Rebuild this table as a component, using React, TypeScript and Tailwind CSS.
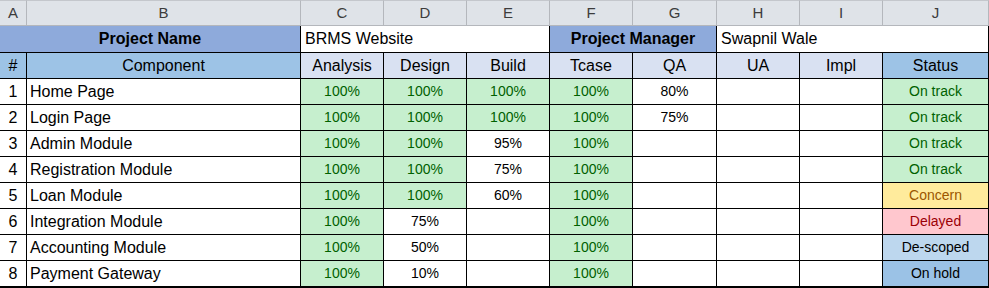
import React from "react";

type Tone = "g" | "w";
type Row = {
  n: number;
  name: string;
  vals: [string, Tone][];
  status: string;
};

const G: [string, Tone] = ["100%", "g"];
const W = (s: string): [string, Tone] => [s, "w"];

const rows: Row[] = [
  { n: 1, name: "Home Page", vals: [G, G, G, G, W("80%"), W(""), W("")], status: "On track" },
  { n: 2, name: "Login Page", vals: [G, G, G, G, W("75%"), W(""), W("")], status: "On track" },
  { n: 3, name: "Admin Module", vals: [G, G, W("95%"), G, W(""), W(""), W("")], status: "On track" },
  { n: 4, name: "Registration Module", vals: [G, G, W("75%"), G, W(""), W(""), W("")], status: "On track" },
  { n: 5, name: "Loan Module", vals: [G, G, W("60%"), G, W(""), W(""), W("")], status: "Concern" },
  { n: 6, name: "Integration Module", vals: [G, W("75%"), W(""), G, W(""), W(""), W("")], status: "Delayed" },
  { n: 7, name: "Accounting Module", vals: [G, W("50%"), W(""), G, W(""), W(""), W("")], status: "De-scoped" },
  { n: 8, name: "Payment Gateway", vals: [G, W("10%"), W(""), G, W(""), W(""), W("")], status: "On hold" },
];

const statusCls: Record<string, string> = {
  "On track": "bg-[#c6efce] text-[#006100]",
  Concern: "bg-[#ffeb9c] text-[#9c5700]",
  Delayed: "bg-[#ffc7ce] text-[#9c0006]",
  "De-scoped": "bg-[#bdd7ee] text-black",
  "On hold": "bg-[#9bc2e6] text-black",
};

const cell = "flex items-center border-r border-b border-black overflow-hidden whitespace-nowrap";
const hdr =
  "flex items-center justify-center border-r border-b border-[#b4b7bc] bg-[#dfe3e8] text-[#3c3c3c] text-[15px]";

export default function App() {
  return (
    <div className="w-[989px] h-[288px] overflow-hidden bg-white font-['Liberation_Sans',Arial,sans-serif] text-black">
      <div className="grid grid-cols-[27px_274px_83px_83px_83px_83px_84px_83px_83px_106px] grid-rows-[26px_27px_repeat(9,26px)]">
        {/* column letters */}
        {["A", "B", "C", "D", "E", "F", "G", "H", "I", "J"].map((l) => (
          <div key={l} className={hdr + " border-t border-t-[#c4c7cc]"}>
            {l}
          </div>
        ))}

        {/* row 1 */}
        <div className={cell + " col-span-2 justify-center bg-[#8eaadb] font-bold text-[16px]"}>Project Name</div>
        <div className={cell + " col-span-3 pl-1 bg-white text-[16px]"}>BRMS Website</div>
        <div className={cell + " col-span-2 justify-center bg-[#8eaadb] font-bold text-[16px]"}>Project Manager</div>
        <div className={cell + " col-span-3 pl-1 bg-white text-[16px]"}>Swapnil Wale</div>

        {/* row 2 */}
        <div className={cell + " justify-center bg-[#9dc3e6] text-[16px]"}>#</div>
        <div className={cell + " justify-center bg-[#9dc3e6] text-[16px]"}>Component</div>
        {["Analysis", "Design", "Build", "Tcase", "QA", "UA", "Impl"].map((h) => (
          <div key={h} className={cell + " justify-center bg-[#d9e1f2] text-[16px]"}>
            {h}
          </div>
        ))}
        <div className={cell + " justify-center bg-[#9dc3e6] text-[16px]"}>Status</div>

        {/* data */}
        {rows.map((r) => (
          <React.Fragment key={r.n}>
            <div className={cell + " justify-center text-[16px]"}>{r.n}</div>
            <div className={cell + " pl-[3px] text-[16px]"}>{r.name}</div>
            {r.vals.map(([v, t], i) => (
              <div
                key={i}
                className={
                  cell +
                  " justify-center text-[14px] " +
                  (t === "g" ? "bg-[#c6efce] text-[#006100]" : "bg-white text-black")
                }
              >
                {v}
              </div>
            ))}
            <div className={cell + " justify-center text-[14px] " + statusCls[r.status]}>{r.status}</div>
          </React.Fragment>
        ))}

        {/* partial next row */}
        {Array.from({ length: 10 }).map((_, i) => (
          <div key={"e" + i} className={cell} />
        ))}
      </div>
    </div>
  );
}
